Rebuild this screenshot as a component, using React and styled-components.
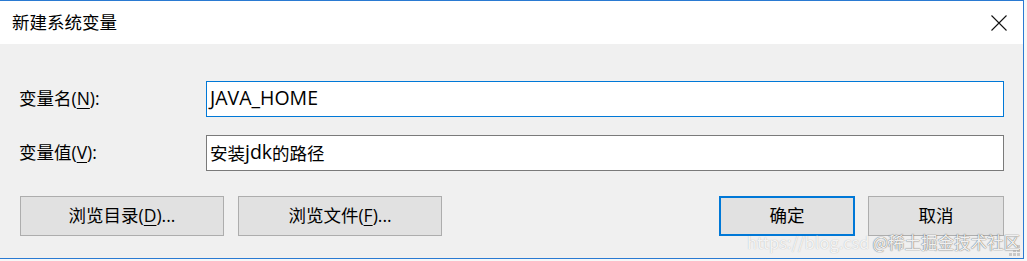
import React from "react";
import styled, { createGlobalStyle } from "styled-components";

const Global = createGlobalStyle`
  html, body { margin: 0; padding: 0; }
  body {
    background: #f7f7f7;
    font-family: "Open Sans", "Noto Sans CJK SC", sans-serif;
    width: 1027px;
    height: 261px;
    overflow: hidden;
  }
  * { box-sizing: border-box; }
`;

const FONT = `"Open Sans", "Noto Sans CJK SC", sans-serif`;

const Window = styled.div`
  position: relative;
  width: 1024px;
  border-top: 1px solid #2a7ad2;
  border-right: 1px solid #2a7ad2;
  border-bottom: 1px solid #2a7ad2;
  background: #f0f0f0;
  display: flex;
  flex-direction: column;
`;

const TitleBar = styled.div`
  height: 43px;
  background: #ffffff;
  display: flex;
  align-items: center;
  justify-content: space-between;
  padding-left: 12px;
`;

const Title = styled.div`
  font-family: ${FONT};
  font-size: 17.5px;
  color: #000;
  line-height: 1;
`;

const CloseButton = styled.div`
  width: 48px;
  height: 43px;
  display: flex;
  align-items: center;
  justify-content: center;
`;

const Content = styled.div`
  padding: 37px 19px 22px 19px;
  display: flex;
  flex-direction: column;
`;

const Form = styled.div`
  display: grid;
  grid-template-columns: 187px 798px;
  row-gap: 18px;
  align-items: center;
`;

const Label = styled.label`
  font-family: ${FONT};
  font-size: 17.5px;
  color: #000;
  line-height: 1;
`;

const Key = styled.span`
  text-decoration: underline;
  text-underline-offset: 3px;
  text-decoration-thickness: 1px;
`;

const Field = styled.div`
  width: 798px;
  height: 36px;
  border: 1px solid ${(p) => (p.$focused ? "#0078d7" : "#7a7a7a")};
  background: #fff;
  padding: 0 3px 2px 3px;
  display: flex;
  align-items: center;
  font-family: ${FONT};
  font-size: 17.5px;
  color: #000;
  white-space: pre;
`;

const Latin = styled.span`
  font-size: 19.5px;
  line-height: 1;
`;

const ButtonRow = styled.div`
  margin-top: 25px;
  padding-left: 1px;
  display: flex;
  align-items: center;
`;

const Group = styled.div`
  display: flex;
  gap: ${(p) => p.$gap}px;
`;

const Spacer = styled.div`
  flex: 1;
`;

const Button = styled.div`
  width: ${(p) => p.$w}px;
  height: 40px;
  background: #e1e1e1;
  border: ${(p) => (p.$default ? "2px solid #0078d7" : "1px solid #adadad")};
  display: flex;
  align-items: center;
  justify-content: center;
  font-family: ${FONT};
  font-size: 17.5px;
  color: #000;
  line-height: 1;
`;

const Watermark = styled.div`
  position: absolute;
  left: 747px;
  top: 231px;
  font-family: "Noto Sans CJK SC", sans-serif;
  font-size: 16.5px;
  line-height: 20px;
  white-space: nowrap;
  pointer-events: none;
  display: flex;
  gap: 3px;
`;

const WmUrl = styled.span`
  color: rgba(255, 255, 255, 0.85);
  text-shadow: 0 0 1px rgba(120, 120, 120, 0.55);
`;

const WmSite = styled.span`
  color: rgba(255, 255, 255, 0.92);
  text-shadow: 0 0 1px rgba(80, 80, 80, 0.85), 0 0 1px rgba(80, 80, 80, 0.6);
`;

const Grip = styled.svg`
  position: absolute;
  right: 3px;
  bottom: 2px;
`;

export default function App() {
  return (
    <>
      <Global />
      <Window>
        <TitleBar>
          <Title>新建系统变量</Title>
          <CloseButton>
            <svg width="16" height="16" viewBox="0 0 16 16">
              <path d="M0.5 0.5 L15.5 15.5 M15.5 0.5 L0.5 15.5" stroke="#111" strokeWidth="1.1" fill="none" />
            </svg>
          </CloseButton>
        </TitleBar>
        <Content>
          <Form>
            <Label>
              变量名(<Key>N</Key>):
            </Label>
            <Field $focused>
              <Latin>JAVA_HOME</Latin>
            </Field>
            <Label>
              变量值(<Key>V</Key>):
            </Label>
            <Field>
              安装<Latin>jdk</Latin>的路径
            </Field>
          </Form>
          <ButtonRow>
            <Group $gap={14}>
              <Button $w={204}>
                浏览目录(<Key>D</Key>)...
              </Button>
              <Button $w={204}>
                浏览文件(<Key>F</Key>)...
              </Button>
            </Group>
            <Spacer />
            <Group $gap={13}>
              <Button $w={136} $default>
                确定
              </Button>
              <Button $w={136}>取消</Button>
            </Group>
          </ButtonRow>
        </Content>
        <Grip width="11" height="11" viewBox="0 0 11 11">
          <rect x="8" y="0" width="3" height="3" fill="#c8c8c8" />
          <rect x="4" y="4" width="3" height="3" fill="#c8c8c8" />
          <rect x="8" y="4" width="3" height="3" fill="#c8c8c8" />
          <rect x="0" y="8" width="3" height="3" fill="#c8c8c8" />
          <rect x="4" y="8" width="3" height="3" fill="#c8c8c8" />
          <rect x="8" y="8" width="3" height="3" fill="#c8c8c8" />
        </Grip>
        <Watermark>
          <WmUrl>https://blog.csd</WmUrl>
          <WmSite>@稀土掘金技术社区</WmSite>
        </Watermark>
      </Window>
    </>
  );
}
